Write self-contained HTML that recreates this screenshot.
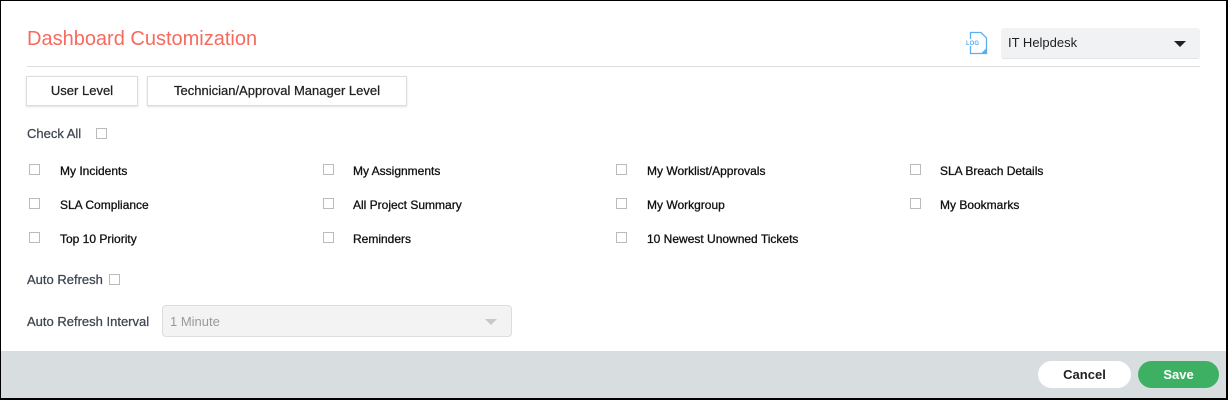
<!DOCTYPE html>
<html><head><meta charset="utf-8"><style>
*{box-sizing:border-box;margin:0;padding:0}
html,body{width:1228px;height:400px;overflow:hidden;background:#fff;font-family:"Liberation Sans",Arial,sans-serif}
.frame{position:absolute;left:0;top:0;width:1228px;height:400px;border:1px solid #000;border-right:2px solid #000;border-bottom:2px solid #000}
.abs{position:absolute}
.title{left:27px;top:28px;font-size:20px;color:#f66a5f;white-space:nowrap}
.hr{left:27px;top:66px;width:1173px;height:1px;background:#ddd}
.btn{top:76px;height:30px;border:1px solid #ddd;box-shadow:0 1px 2px rgba(0,0,0,.12);font-size:13px;color:#222;text-align:center;line-height:28px;background:#fff;-webkit-text-stroke:0.25px #222}
.lbl{font-size:13px;color:#3d4650;-webkit-text-stroke:0.25px #3d4650}
.cb{width:11px;height:11px;border:1px solid #bbb;background:#fff}
.it{font-size:12px;color:#111;white-space:nowrap;-webkit-text-stroke:0.3px #111}
.sel{left:1001px;top:28px;width:199px;height:31px;background:#f1f2f4;border-radius:3px;border-bottom:1px solid #e2e4e6;font-size:13px;color:#222;line-height:30px;padding-left:7px}
.tri{width:0;height:0;border-left:6px solid transparent;border-right:6px solid transparent;border-top:6px solid #222}
.footer{left:1px;top:351px;width:1225px;height:47px;background:#d8dde0}
.pill{top:361px;height:27px;border-radius:14px;font-size:13px;font-weight:bold;text-align:center;line-height:27px}
</style></head><body>
<div class="abs title">Dashboard Customization</div>
<svg class="abs" style="left:964px;top:30px" width="26" height="26" viewBox="0 0 26 26">
<path d="M6.5 2.5 H17 L22.5 8 V23.5 H6.5 Z" fill="#fff" stroke="#5aaff0" stroke-width="1.3"/>
<path d="M17 23.5 L22.5 18 V23.5 Z" fill="#5aaff0"/>
<rect x="1" y="9" width="14" height="7" fill="#fff"/>
<text x="2" y="15" font-size="6" font-weight="bold" fill="#5aaff0" font-family="Liberation Sans">LOG</text>
</svg>
<div class="abs sel">IT Helpdesk<div class="abs tri" style="right:14px;top:13px"></div></div>
<div class="abs hr"></div>
<div class="abs btn" style="left:26px;width:112px">User Level</div>
<div class="abs btn" style="left:147px;width:260px">Technician/Approval Manager Level</div>
<div class="abs lbl" style="left:27px;top:126px">Check All</div>
<div class="abs cb" style="left:96px;top:128px"></div>

<div class="abs cb" style="left:29px;top:164px"></div><div class="abs it" style="left:60px;top:164px">My Incidents</div>
<div class="abs cb" style="left:323px;top:164px"></div><div class="abs it" style="left:353px;top:164px">My Assignments</div>
<div class="abs cb" style="left:616px;top:164px"></div><div class="abs it" style="left:647px;top:164px">My Worklist/Approvals</div>
<div class="abs cb" style="left:910px;top:164px"></div><div class="abs it" style="left:940px;top:164px">SLA Breach Details</div>

<div class="abs cb" style="left:29px;top:198px"></div><div class="abs it" style="left:60px;top:198px">SLA Compliance</div>
<div class="abs cb" style="left:323px;top:198px"></div><div class="abs it" style="left:353px;top:198px">All Project Summary</div>
<div class="abs cb" style="left:616px;top:198px"></div><div class="abs it" style="left:647px;top:198px">My Workgroup</div>
<div class="abs cb" style="left:910px;top:198px"></div><div class="abs it" style="left:940px;top:198px">My Bookmarks</div>

<div class="abs cb" style="left:29px;top:232px"></div><div class="abs it" style="left:60px;top:232px">Top 10 Priority</div>
<div class="abs cb" style="left:323px;top:232px"></div><div class="abs it" style="left:353px;top:232px">Reminders</div>
<div class="abs cb" style="left:616px;top:232px"></div><div class="abs it" style="left:647px;top:232px">10 Newest Unowned Tickets</div>

<div class="abs lbl" style="left:27px;top:272px">Auto Refresh</div>
<div class="abs cb" style="left:109px;top:274px"></div>
<div class="abs lbl" style="left:27px;top:314px">Auto Refresh Interval</div>
<div class="abs" style="left:162px;top:305px;width:350px;height:32px;background:#f3f3f3;border:1px solid #ddd;border-radius:4px;font-size:13px;color:#999;line-height:31px;padding-left:7px">1 Minute<div class="abs tri" style="right:14px;top:13px;border-top-color:#c8c8c8"></div></div>

<div class="abs footer"></div>
<div class="abs pill" style="left:1038px;width:93px;background:#fff;color:#222">Cancel</div>
<div class="abs pill" style="left:1138px;width:81px;background:#3eb063;color:#fff">Save</div>
<div class="frame"></div>
</body></html>
